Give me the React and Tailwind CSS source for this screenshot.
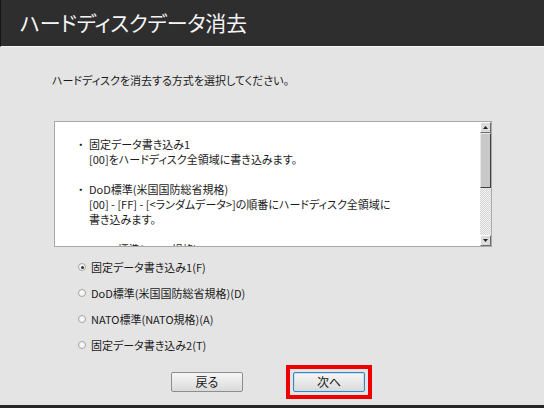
const jp = "font-['Meiryo_UI','Noto_Sans_CJK_JP',sans-serif] [font-feature-settings:'palt']";

const options = [
  { label: '固定データ書き込み1(F)', checked: true },
  { label: 'DoD標準(米国国防総省規格)(D)' },
  { label: 'NATO標準(NATO規格)(A)' },
  { label: '固定データ書き込み2(T)' },
];

function Entry({ lines }) {
  return (
    <div className="grid grid-cols-[11px_1fr] pl-[23px]">
      <span className="whitespace-nowrap">・</span>
      <span>{lines[0]}</span>
      {lines.slice(1).map((l) => (
        <span key={l} className="col-start-2">{l}</span>
      ))}
    </div>
  );
}

function ScrollBar() {
  return (
    <div className="w-[11px] shrink-0 flex flex-col bg-[repeating-conic-gradient(#d4d4d4_0_25%,#f4f4f4_0_50%)] bg-[length:2px_2px]">
      <div className="h-[11px] bg-[#dcdcdc] border border-t-white border-l-white border-r-[#6e6e6e] border-b-[#6e6e6e] flex items-center justify-center">
        <svg width="5" height="3" viewBox="0 0 5 3"><path d="M2.5 0 L5 3 L0 3 Z" fill="#222" /></svg>
      </div>
      <div className="h-[55px] bg-[#c8c8c8] border border-t-[#e8e8e8] border-l-[#e8e8e8] border-r-[#404040] border-b-[#404040]" />
      <div className="flex-1" />
      <div className="h-[11px] bg-[#dcdcdc] border border-t-white border-l-white border-r-[#6e6e6e] border-b-[#6e6e6e] flex items-center justify-center">
        <svg width="5" height="3" viewBox="0 0 5 3"><path d="M0 0 L5 0 L2.5 3 Z" fill="#222" /></svg>
      </div>
    </div>
  );
}

function Button({ children, focused }) {
  return (
    <button
      className={`w-[72px] h-[20px] rounded-[2px] text-[12px] leading-none text-[#1a1a1a] bg-gradient-to-b from-[#f6f6f6] to-[#dadada] border ${
        focused ? 'border-[#3d86b8] shadow-[inset_0_0_0_1px_#bfe0f5]' : 'border-[#8d8d8d]'
      }`}
    >
      {children}
    </button>
  );
}

export default function App() {
  return (
    <div className={`${jp} w-[544px] h-[408px] flex flex-col bg-[#e4e4e4] border-b-[3px] border-[#262626] text-[#1a1a1a]`}>
      <div className="h-[47px] shrink-0 bg-[#2e2e2e] border-l border-[#141414] border-b border-b-[#f4f4f4] pl-[19px] flex items-center">
        <h1 className="text-[21px] leading-none text-[#f4f4f4] tracking-[-0.3px] pb-[2px]">ハードディスクデータ消去</h1>
      </div>

      <div className="flex flex-col pl-[52px] text-[11px]">
        <p className="mt-[25px] leading-[16px]">ハードディスクを消去する方式を選択してください。</p>

        <div className="mt-[33px] ml-[2px] w-[438px] h-[126px] flex bg-white border border-[#a9a9a9]">
          <div className="flex-1 overflow-hidden pt-[15px] leading-[15px] flex flex-col gap-[15px]">
            <Entry lines={['固定データ書き込み1', '[00]をハードディスク全領域に書き込みます。']} />
            <Entry
              lines={[
                'DoD標準(米国国防総省規格)',
                '[00] - [FF] - [<ランダムデータ>]の順番にハードディスク全領域に',
                '書き込みます。',
              ]}
            />
            <Entry lines={['NATO標準(NATO規格)']} />
          </div>
          <ScrollBar />
        </div>

        <div className="mt-[7px] pl-[26px] flex flex-col">
          {options.map((o) => (
            <label key={o.label} className="h-[26px] flex items-center gap-[5px] leading-[14px]">
              <span className="w-[8px] h-[8px] rounded-full border border-[#a4a4a4] bg-[#f6f6f6] flex items-center justify-center">
                {o.checked && <span className="w-[3px] h-[3px] rounded-full bg-[#333]" />}
              </span>
              <span>{o.label}</span>
            </label>
          ))}
        </div>

        <div className="mt-[7px] pl-[119px] flex items-center gap-[43px]">
          <Button>戻る</Button>
          <div className="border-4 border-[#ee0000] p-[3px] flex">
            <Button focused>次へ</Button>
          </div>
        </div>
      </div>
    </div>
  );
}
